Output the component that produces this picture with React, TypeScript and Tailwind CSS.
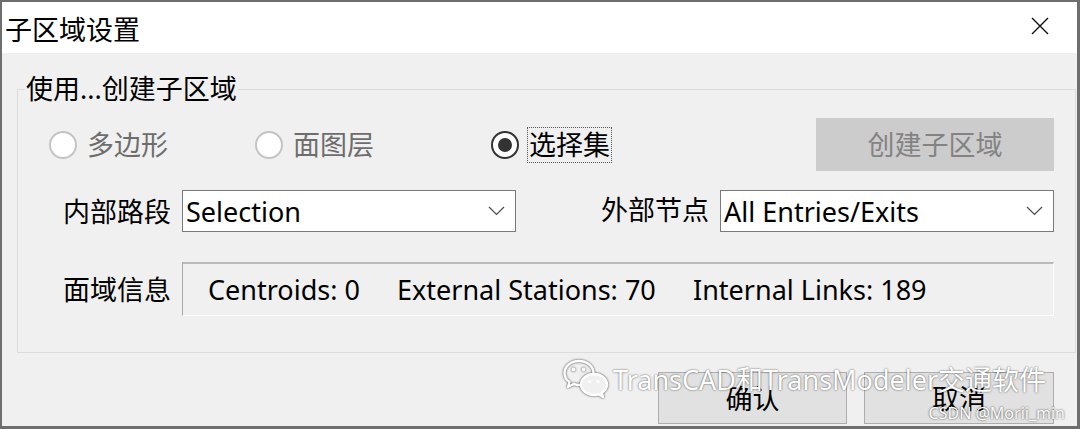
import { ReactNode } from "react";

const font = "font-['Noto_Sans','Noto_Sans_CJK_SC',sans-serif]";

function Radio({
  label,
  checked,
  disabled,
  className,
}: {
  label: string;
  checked?: boolean;
  disabled?: boolean;
  className?: string;
}) {
  return (
    <div className={`flex items-center ${className ?? ""}`}>
      {checked ? (
        <span className="flex h-[28px] w-[28px] items-center justify-center rounded-full border-2 border-[#333333] bg-white">
          <span className="h-[14px] w-[14px] rounded-full bg-[#333333]" />
        </span>
      ) : (
        <span className="h-[28px] w-[28px] rounded-full border-2 border-[#c4c4c4] bg-white" />
      )}
      <span
        className={`ml-[8px] border border-dotted px-px text-[27px] leading-[34px] ${
          checked ? "border-[#555555]" : "border-transparent"
        } ${disabled ? "text-[#6d6d6d]" : "text-black"}`}
      >
        {label}
      </span>
    </div>
  );
}

function Chevron() {
  return (
    <svg width="17" height="10" viewBox="0 0 17 10" className="shrink-0">
      <polyline points="1,1 8.5,8.5 16,1" fill="none" stroke="#4a4a4a" strokeWidth="1.2" />
    </svg>
  );
}

function Combo({ value }: { value: string }) {
  return (
    <div className="flex h-[42px] w-[334px] items-center justify-between border border-[#7a7a7a] bg-white pl-[3px] pr-[10px]">
      <span className="text-[27px] leading-none text-black">{value}</span>
      <Chevron />
    </div>
  );
}

function Label({ children }: { children: ReactNode }) {
  return <span className="w-[108px] shrink-0 text-[27px] leading-none text-black">{children}</span>;
}

function WeChatIcon() {
  return (
    <svg
      width="46"
      height="40"
      viewBox="0 0 46 40"
      className="[filter:drop-shadow(0_0_1px_rgba(0,0,0,0.75))]"
    >
      <path
        d="M16 2 C7.5 2 1.5 7.5 1.5 14 C1.5 18 3.5 21 6.5 23 L5 28 L10.5 25 C12.3 25.6 14.2 26 16 26 C24.5 26 30.5 20.5 30.5 14 C30.5 7.5 24.5 2 16 2 Z"
        fill="none"
        stroke="white"
        strokeWidth="2.4"
        strokeLinejoin="round"
      />
      <circle cx="10.5" cy="10.5" r="1.9" fill="white" />
      <circle cx="20.5" cy="10.5" r="1.9" fill="white" />
      <path
        d="M31 15 C23.5 15 18 19.7 18 25.5 C18 31.3 23.5 36 31 36 C32.6 36 34.1 35.7 35.5 35.3 L40 38 L38.8 33.6 C42.1 31.7 44 28.8 44 25.5 C44 19.7 38.5 15 31 15 Z"
        fill="#f0f0f0"
        stroke="white"
        strokeWidth="2.4"
        strokeLinejoin="round"
      />
      <circle cx="26.5" cy="22.5" r="1.6" fill="white" />
      <circle cx="35" cy="22.5" r="1.6" fill="white" />
    </svg>
  );
}

export default function App() {
  return (
    <div
      className={`relative flex h-[429px] w-[1080px] flex-col overflow-hidden border-t-2 border-l-2 border-r-[3px] border-b-[3px] border-[#6e6e6e] ${font}`}
    >
      {/* title bar */}
      <div className="flex h-[51px] shrink-0 items-center justify-between bg-white pl-[3px] pr-[28px]">
        <span className="mt-[4px] text-[27px] leading-none text-black">子区域设置</span>
        <svg width="18" height="18" viewBox="0 0 18 18" className="mb-[3px]">
          <path d="M1 1 L17 17 M17 1 L1 17" stroke="#111111" strokeWidth="1.4" />
        </svg>
      </div>

      {/* body */}
      <div className="flex flex-1 flex-col bg-[#f0f0f0] pl-[15px] pr-[1px] pt-[21px]">
        <fieldset className="min-w-0 border border-[#dcdcdc]">
          <legend className="ml-[7px] px-px text-[27px] leading-[30px] text-black">使用...创建子区域</legend>

          <div className="mt-[14px] flex h-[53px] items-center pl-[31px] pr-[21px]">
            <Radio label="多边形" disabled className="w-[206px]" />
            <Radio label="面图层" disabled className="w-[236px]" />
            <Radio label="选择集" checked />
            <button className="ml-auto flex h-[53px] w-[238px] items-center justify-center bg-[#cccccc] text-[27px] leading-none text-[#838383]">
              创建子区域
            </button>
          </div>

          <div className="mt-[19px] flex h-[42px] items-center pl-[45px]">
            <Label>内部路段</Label>
            <div className="ml-[11px]">
              <Combo value="Selection" />
            </div>
            <div className="ml-[85px]">
              <Label>外部节点</Label>
            </div>
            <div className="ml-[11px]">
              <Combo value="All Entries/Exits" />
            </div>
          </div>

          <div className="mb-[36px] mt-[30px] flex items-center pl-[45px]">
            <Label>面域信息</Label>
            <div className="ml-[11px] flex h-[54px] w-[872px] items-center border-t-2 border-l border-b border-r border-t-[#b9b9b9] border-l-[#a8a8a8] border-b-white border-r-white pl-[25px] text-[27px] leading-none text-black">
              <span className="w-[189px] shrink-0">Centroids: 0</span>
              <span className="w-[296px] shrink-0">External Stations: 70</span>
              <span>Internal Links: 189</span>
            </div>
          </div>
        </fieldset>

        <div className="mr-[22px] mt-[19px] flex justify-end gap-[17px]">
          <button className="flex h-[52px] w-[189px] items-center justify-center border border-[#adadad] bg-[#e1e1e1] text-[27px] leading-none text-black">
            确认
          </button>
          <button className="flex h-[52px] w-[190px] items-center justify-center border border-[#adadad] bg-[#e1e1e1] text-[27px] leading-none text-black">
            取消
          </button>
        </div>
      </div>

      {/* watermark overlay */}
      <div className="pointer-events-none absolute left-[561px] top-[357px] flex items-center gap-[4px]">
        <WeChatIcon />
        <span className="text-[27px] leading-none text-white [text-shadow:0_0_2px_rgba(0,0,0,0.7)]">
          TransCAD和TransModeler交通软件
        </span>
      </div>
      <span className="pointer-events-none absolute bottom-[5px] right-[12px] text-[16px] leading-none text-white [text-shadow:0_0_2px_rgba(0,0,0,0.8)]">
        CSDN @Morii_min
      </span>
    </div>
  );
}
